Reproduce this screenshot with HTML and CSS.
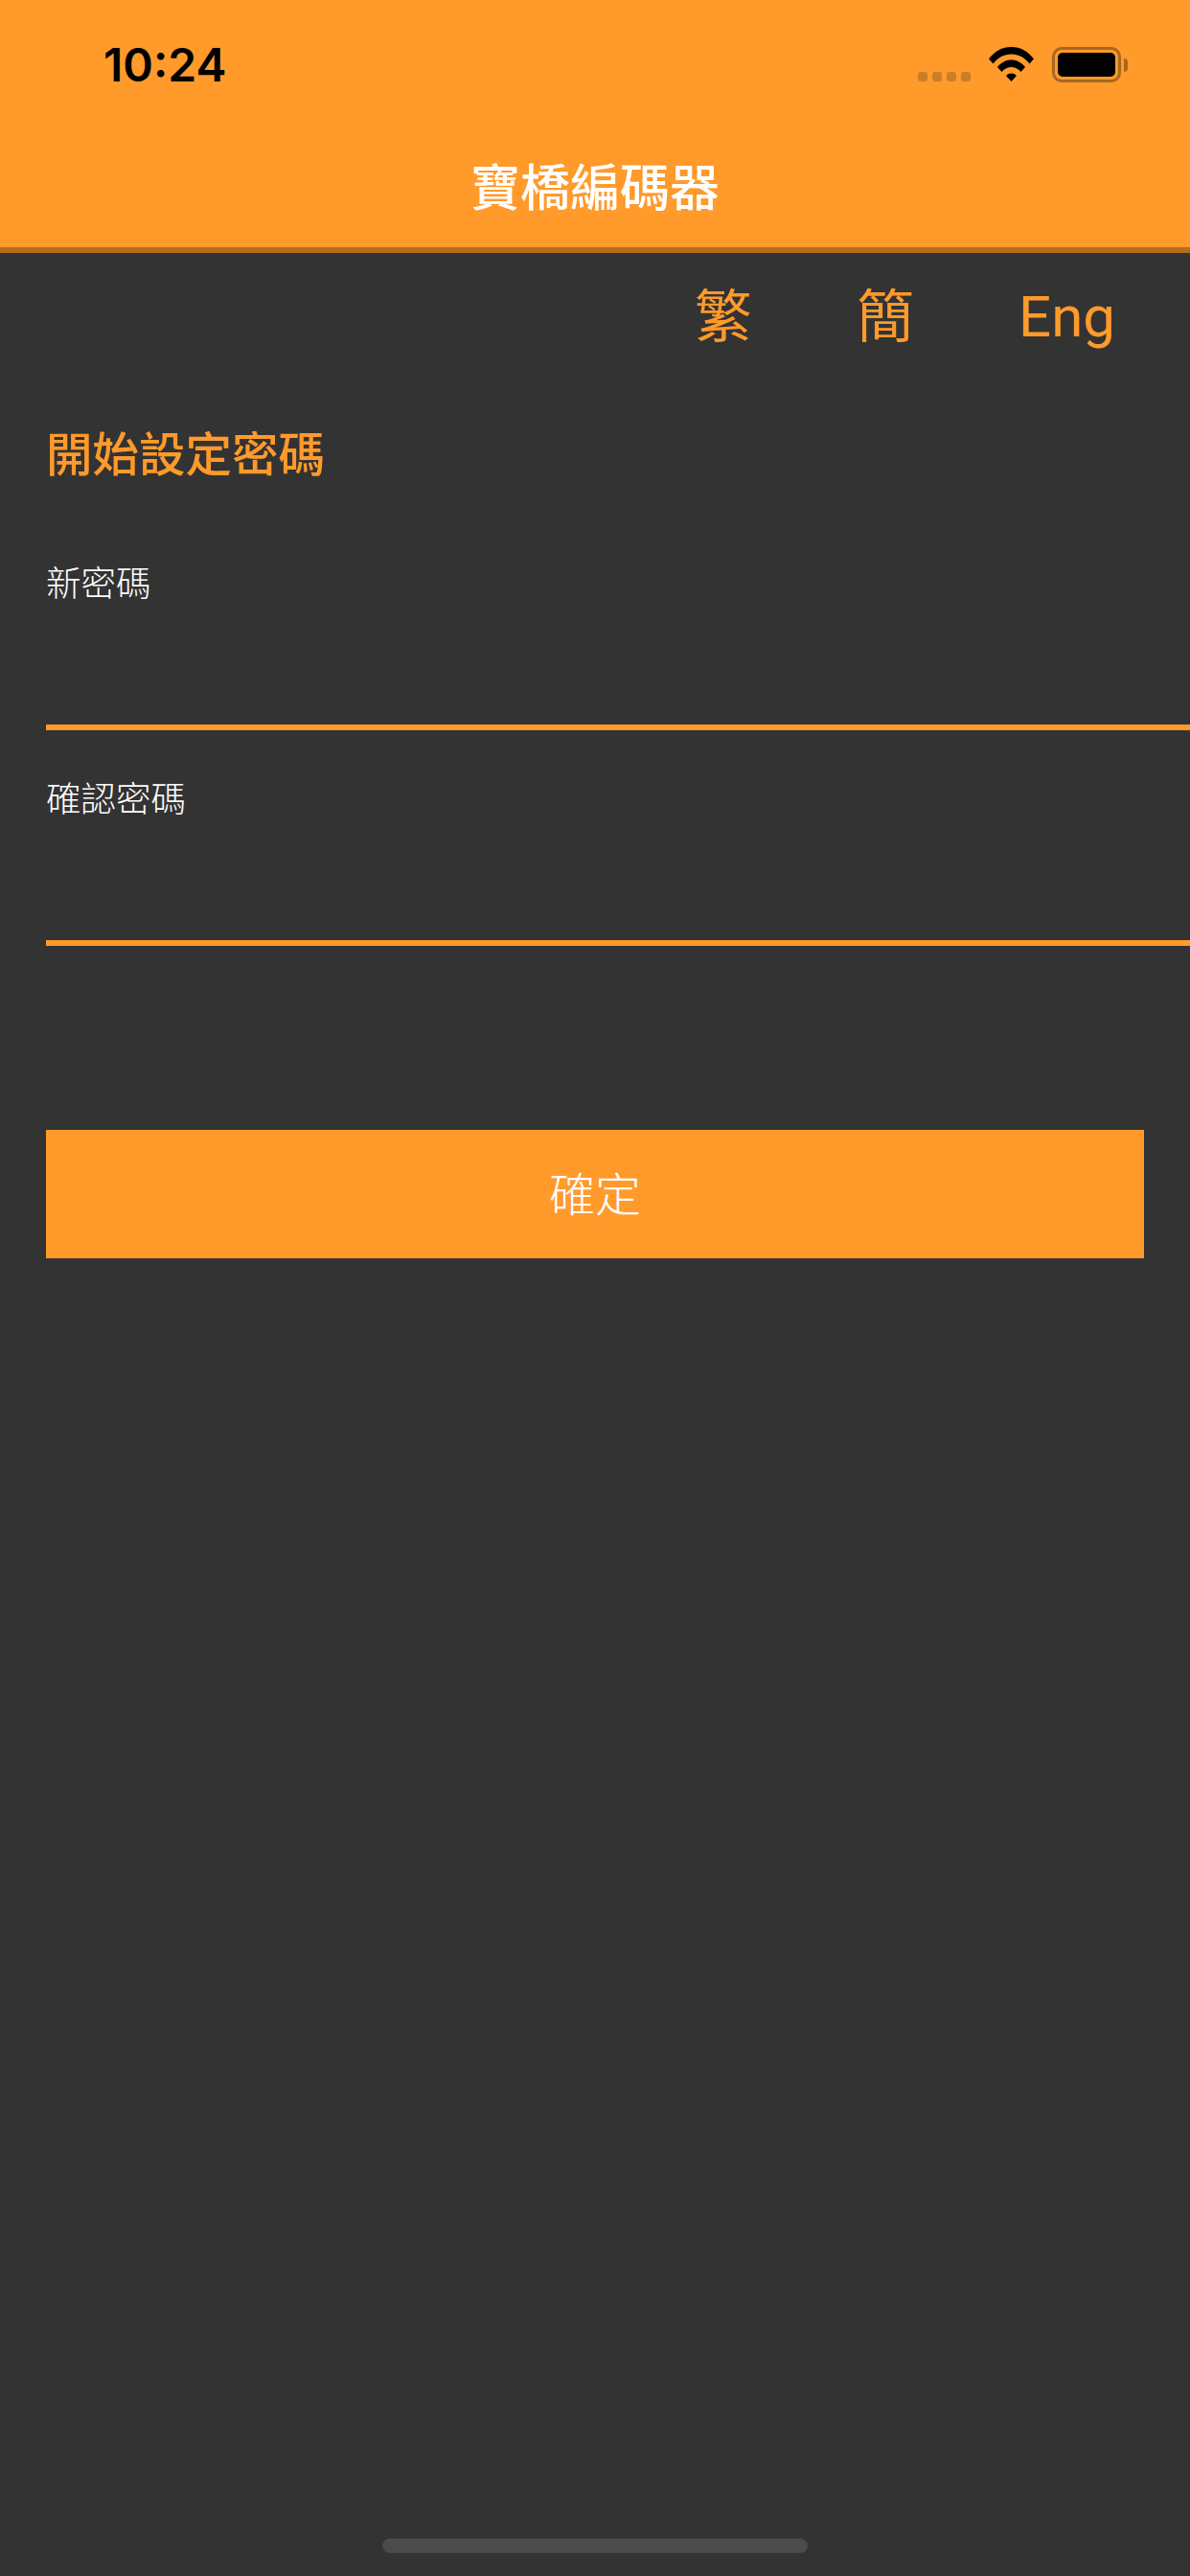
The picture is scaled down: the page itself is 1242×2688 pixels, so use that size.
FILE: index.html
```html
<!DOCTYPE html>
<html lang="zh-Hant">
<head>
    <meta charset="UTF-8">
    <meta name="viewport" content="width=device-width, initial-scale=1.0">
    <title>寶橋編碼器</title>
    <link rel="stylesheet" href="styles.css">
</head>
<body>
    <header class="app-header">
        <div class="status-bar">
            <span class="clock">10:24</span>
            <div class="status-icons">
                <div class="signal">
                    <span class="signal-dot"></span>
                    <span class="signal-dot"></span>
                    <span class="signal-dot"></span>
                    <span class="signal-dot"></span>
                </div>
                <svg class="wifi" viewBox="0 0 47 36" width="47" height="36">
                    <path d="M0 12.5C6 4.5 14 0 23.500 0S41 4.500 47 12.500L42.500 17.500C37.500 11 31 7.500 23.500 7.500S9.500 11 4.500 17.500Z"/>
                    <path d="M9 21C13 16 18 13.500 23.500 13.500S34 16 38 21L33.500 26C30.500 22.500 27 21 23.500 21S16.500 22.500 13.500 26Z"/>
                    <path d="M18 30C19.500 28.300 21.500 27.500 23.500 27.500S27.500 28.300 29 30L23.500 36Z"/>
                </svg>
                <div class="battery">
                    <div class="battery-body"><span class="battery-fill"></span></div>
                    <span class="battery-cap"></span>
                </div>
            </div>
        </div>
        <h1 class="app-title">寶橋編碼器</h1>
    </header>

    <nav class="lang-bar">
        <a class="lang-item lang-tc" href="#">繁</a>
        <a class="lang-item lang-sc" href="#">簡</a>
        <a class="lang-item lang-en" href="#" lang="en">Eng</a>
    </nav>

    <main class="form">
        <h2 class="form-title">開始設定密碼</h2>
        <div class="field field-first">
            <label class="field-label">新密碼</label>
            <div class="field-input"></div>
        </div>
        <div class="field">
            <label class="field-label">確認密碼</label>
            <div class="field-input"></div>
        </div>
        <button class="submit" type="button">確定</button>
    </main>

    <div class="home-indicator"></div>
</body>
</html>
```

FILE: styles.css
```css
* {
    box-sizing: border-box;
}

html, body {
    margin: 0;
    padding: 0;
}

body {
    width: 1242px;
    height: 2688px;
    overflow: hidden;
    position: relative;
    background: #333333;
    color: #ffffff;
    font-family: "Noto Sans CJK TC", "Noto Sans", sans-serif;
}

/* top orange bar */
.app-header {
    height: 264px;
    background: #ff9a2b;
    border-bottom: 6px solid #b46d1f;
}

.status-bar {
    height: 168px;
    padding: 46px 65px 0 108px;
    display: flex;
    justify-content: space-between;
    align-items: flex-start;
}

.clock {
    font-family: Inter, "Liberation Sans", sans-serif;
    font-size: 48px;
    line-height: 44px;
    font-weight: 600;
    color: #000000;
}

.status-icons {
    display: flex;
    align-items: flex-start;
    padding-top: 3px;
}

.signal {
    display: flex;
    gap: 5px;
    margin-top: 26px;
    margin-right: 19px;
}

.signal-dot {
    width: 10px;
    height: 10px;
    border-radius: 3px;
    background: #c97f28;
}

.wifi {
    display: block;
    fill: #000000;
    margin-right: 19px;
}

.battery {
    display: flex;
    align-items: center;
}

.battery-body {
    width: 72px;
    height: 37px;
    padding: 3px;
    border: 3px solid #a9671f;
    border-radius: 10px;
}

.battery-fill {
    display: block;
    width: 100%;
    height: 100%;
    border-radius: 5px;
    background: #000000;
}

.battery-cap {
    width: 4px;
    height: 14px;
    margin-left: 3px;
    border-radius: 0 7px 7px 0;
    background: #a9671f;
}

.app-title {
    margin: 0;
    font-size: 52px;
    line-height: 50px;
    font-weight: 500;
    text-align: center;
    color: #ffffff;
}

/* language switch */
.lang-bar {
    height: 130px;
    padding-right: 78px;
    display: flex;
    justify-content: flex-end;
    align-items: center;
    gap: 109px;
}

.lang-item {
    font-size: 60px;
    line-height: 82px;
    color: #ff9a2b;
    text-decoration: none;
}

.lang-tc,
.lang-sc {
    padding-bottom: 6px;
}

.lang-en {
    padding-top: 3px;
    font-family: Roboto, "Liberation Sans", sans-serif;
}

/* password form */
.form {
    padding: 47px 48px 0;
}

.form-title {
    margin: 0;
    font-size: 48.500px;
    line-height: 60px;
    font-weight: 500;
    color: #ff9a2b;
}

.field {
    margin-right: -48px;
    margin-bottom: 46px;
}

.field-first {
    margin-top: 82px;
}

.field-label {
    display: block;
    font-size: 36.500px;
    line-height: 48px;
    font-weight: 300;
    color: #ffffff;
}

.field-input {
    height: 131px;
    border-bottom: 6px solid #ff9a2b;
}

.submit {
    display: block;
    width: 100%;
    height: 134px;
    margin-top: 192px;
    padding: 0 0 6px;
    border: 0;
    border-radius: 0;
    background: #ff9a2b;
    color: #ffffff;
    font-family: inherit;
    font-size: 48px;
    font-weight: 300;
}

.home-indicator {
    position: absolute;
    left: 399px;
    bottom: 24px;
    width: 444px;
    height: 15px;
    border-radius: 8px;
    background: #4b4b4b;
}
```
